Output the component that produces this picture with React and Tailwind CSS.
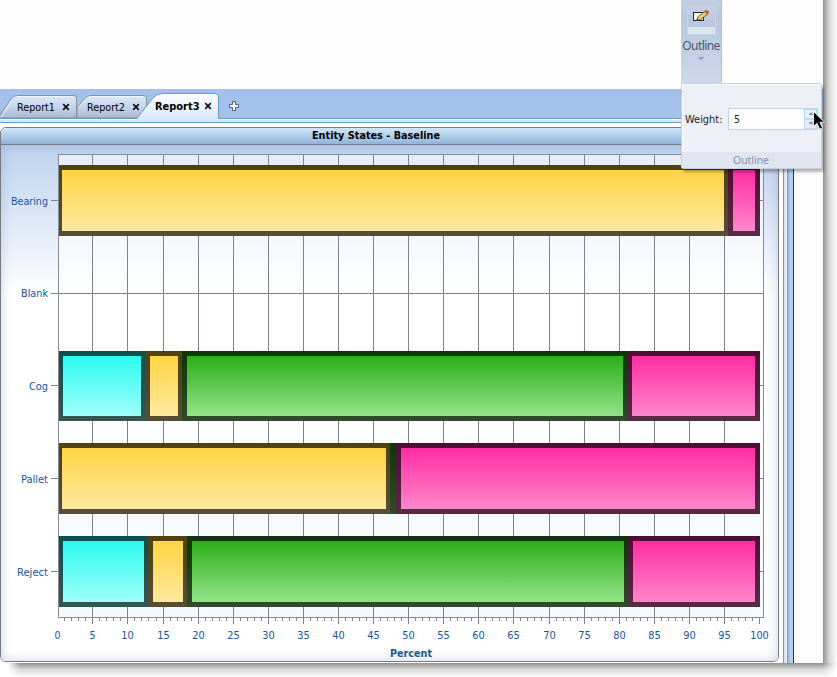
import React from "react";

const X0 = 58;
const FONT = "font-['DejaVu_Sans_Condensed','DejaVu_Sans',sans-serif]";
const UI = "font-['Noto_Sans',sans-serif]";

const palette = {
  cyan: { fill: ["#2bfaf0", "#a0fffb"], edge: ["#0d504d", "#355654"] },
  yellow: { fill: ["#ffd443", "#ffe9a0"], edge: ["#50410f", "#554e36"] },
  green: { fill: ["#2bae18", "#93e389"], edge: ["#0b3606", "#304b2d"] },
  pink: { fill: ["#ff2da3", "#ff87cb"], edge: ["#500d33", "#562c44"] },
};

// Each segment: color, outer left, outer right, inner left, inner right
const rows = [
  { label: "Bearing", line: 200, top: 165, bottom: 236, segs: [["yellow", 59, 728, 62, 724], ["pink", 728, 760, 733, 755]] },
  { label: "Blank", line: 293, segs: [] },
  { label: "Cog", line: 385, top: 351, bottom: 421, segs: [["cyan", 59, 145, 63, 141], ["yellow", 145, 182, 150, 178], ["green", 182, 627, 187, 623], ["pink", 627, 760, 632, 755]] },
  { label: "Pallet", line: 478, top: 443, bottom: 514, segs: [["yellow", 59, 390, 62, 386], ["green", 390, 396, 393, 393], ["pink", 396, 760, 401, 755]] },
  { label: "Reject", line: 571, top: 536, bottom: 607, segs: [["cyan", 59, 148, 63, 144], ["yellow", 148, 187, 153, 183], ["green", 187, 628, 192, 624], ["pink", 628, 760, 633, 755]] },
];
const labelWidths = { Bearing: 37, Blank: 27, Cog: 19, Pallet: 27, Reject: 31 };
const xAt = (v) => Math.floor(57.75 + v * 7.018);

function Chart() {
  const majors = Array.from({ length: 21 }, (_, i) => i * 5);
  const minors = Array.from({ length: 101 }, (_, i) => i).filter((i) => i % 5);
  return (
    <svg width="777" height="516" viewBox="1 145 777 516" shapeRendering="crispEdges" className={`block ${FONT}`}>
      <defs>
        {Object.entries(palette).map(([k, c]) => (
          <React.Fragment key={k}>
            <linearGradient id={`f-${k}`} x2="0" y2="1"><stop stopColor={c.fill[0]} /><stop offset="1" stopColor={c.fill[1]} /></linearGradient>
            <linearGradient id={`e-${k}`} x2="0" y2="1"><stop stopColor={c.edge[0]} /><stop offset="1" stopColor={c.edge[1]} /></linearGradient>
          </React.Fragment>
        ))}
        <linearGradient id="plot" x2="0" y2="1">
          <stop stopColor="#e6edf8" /><stop offset=".08" stopColor="#ebf1fa" /><stop offset=".3" stopColor="#fff" /><stop offset=".45" stopColor="#fff" /><stop offset="1" stopColor="#f4f9fd" />
        </linearGradient>
      </defs>
      <rect x={X0} y="154" width="706" height="464" fill="url(#plot)" />
      {majors.slice(1, 20).map((v) => <rect key={v} x={xAt(v)} y="154" width="1" height="470" fill="#80838c" />)}
      {rows.map((r) => <rect key={r.label} x="51" y={r.line} width="712" height="1" fill="#80838c" />)}
      <rect x="58.5" y="154.5" width="705" height="463" fill="none" stroke="#868b94" />
      {minors.map((v) => <rect key={v} x={xAt(v)} y="618" width="1" height="3" fill="#80838c" />)}
      <rect x="759" y="618" width="1" height="6" fill="#80838c" />
      {rows.map((r) => r.segs.map(([c, x1, x2, a, b]) => (
        <g key={r.label + c}>
          <rect x={x1} y={r.top} width={x2 - x1} height={r.bottom - r.top} fill={`url(#e-${c})`} />
          <rect x={a} y={r.top + 5} width={b - a} height={r.bottom - r.top - 10} fill={`url(#f-${c})`} />
        </g>
      )))}
      <g fill="#15569b" fontSize="11">
        {rows.map((r) => (
          <text key={r.label} x={48 - labelWidths[r.label]} y={r.line + (r.label === "Blank" ? 4 : 5)} textLength={labelWidths[r.label]} lengthAdjust="spacingAndGlyphs">{r.label}</text>
        ))}
        {majors.map((v) => {
          const w = v < 10 ? 6 : v < 100 ? 12.5 : 18.5;
          return <text key={v} x={xAt(v) + 0.5 - w / 2} y="639" textLength={w} lengthAdjust="spacingAndGlyphs">{v}</text>;
        })}
        <text x="390" y="657" fontWeight="bold" textLength="42" lengthAdjust="spacingAndGlyphs">Percent</text>
      </g>
    </svg>
  );
}

function TabLabels() {
  const items = [["Report1", 17, 38, 111, 66], ["Report2", 87, 38, 111, 136], ["Report3", 155, 44.5, 110, 208]];
  return (
    <svg width="823" height="38" viewBox="0 89 823 38" className={`block ${FONT}`}>
      <defs>
        <linearGradient id="tab" x2="0" y2="1"><stop stopColor="#dce9f8" /><stop offset=".5" stopColor="#c5d6eb" /><stop offset="1" stopColor="#a3bad6" /></linearGradient>
        <linearGradient id="active" x2="0" y2="1"><stop stopColor="#fff" /><stop offset="1" stopColor="#d7e8fb" /></linearGradient>
      </defs>
      <rect y="89" width="823" height="29" fill="#a3c1ea" />
      <rect y="118" width="823" height="1" fill="#629fc1" />
      <rect y="119" width="823" height="1" fill="#fff" />
      <rect y="120" width="823" height="2" fill="#d7e8fb" />
      <rect y="122" width="823" height="1" fill="#629fc1" />
      <rect y="123" width="823" height="4" fill="#fff" />
      <path d="M-2 118 L11 99 Q14 95.500 18 95.500 H73 Q76.500 95.500 76.500 98 V118Z" fill="url(#tab)" stroke="#8790a0" />
      <path d="M77 118 V108 L84 99 Q87 95.500 91 95.500 H143 Q146.500 95.500 146.500 98 V118Z" fill="url(#tab)" stroke="#8790a0" />
      <path d="M1 117 L12 100 Q15 96.500 18 96.500 H73 M78 108 L85 100 Q88 96.500 91 96.500 H143" fill="none" stroke="#eef5fc" />
      <rect y="118" width="137" height="1" fill="#629fc1" />
      <path d="M136 120 L153 98 Q157 93.500 162 93.500 H215 Q218.500 93.500 218.500 97 V120Z" fill="url(#active)" />
      <path d="M136.500 118.500 L153 98 Q157 93.500 162 93.500 H215 Q218.500 93.500 218.500 97 V118.500" fill="none" stroke="#629fc1" />
      {items.map(([t, x, w, y, c], i) => (
        <g key={t}>
          <text x={x} y={y} fontSize="11" fontWeight={i === 2 ? "bold" : "normal"} fill="#000" textLength={w} lengthAdjust="spacingAndGlyphs">{t}</text>
          <path d={`M${c - 2.8} ${y - 6.8}l5.600 5.600m0-5.600l-5.600 5.600`} stroke="#111" strokeWidth="1.7" />
        </g>
      ))}
      <path d="M232.500 101.500h3v3h3v3h-3v3h-3v-3h-3v-3h3z" fill="#fff" stroke="#49618d" />
    </svg>
  );
}

function OutlinePopup() {
  return (
    <div className="absolute left-[681px] top-0 w-[141px]">
      <div className="flex h-[83px] w-[41px] flex-col items-center border-r border-[#aebfd9] bg-linear-to-b from-[#c3cfe2] via-[#b8c7de] via-20% to-[#cdd9ea]">
        <div className="mt-[6px] h-[29px] w-[29px] rounded-xs border border-[#c9d5e7] bg-linear-to-b from-[#c3d0e4] to-[#b5c4dc]">
          <svg width="27" height="27" viewBox="0 0 27 27" className="block">
            <rect y="20" width="27" height="7" fill="#dce4ef" />
            <rect x="5.500" y="5.500" width="10" height="8" fill="#fff" stroke="#222" shapeRendering="crispEdges" />
            <path d="M8.800 13.500l1.200-3.800L17 4 20 6.800 12.700 12.500z" fill="#e8d060" stroke="#4a4330" strokeWidth=".8" />
            <path d="M16.200 4.600L18.200 3.200Q20.600 3.400 20.800 5.600L19.200 7.200z" fill="#d9644f" stroke="#8c4a3a" strokeWidth=".5" />
            <path d="M8.500 13.800l.8-2.200 1.500 1.400z" fill="#222" />
          </svg>
        </div>
        <div className={`${UI} mt-[2px] h-[17px] text-[12px] leading-[17px] tracking-[-0.6px] text-[#4c586e]`}>Outline</div>
        <svg width="7" height="4" className="mt-[3px]"><path d="M0 0h6L3 3.500z" fill="#8b9dc3" /></svg>
      </div>
      <div className="flex h-[86px] w-[141px] flex-col rounded-xs border border-[#c2cfe4] bg-linear-to-b from-[#eceff5] to-[#edf1f7] shadow-[2px_3px_3px_rgba(0,0,0,0.3)]">
        <div className="flex h-[68px] items-center border-t border-l border-white pl-0.5">
          <svg width="40" height="18" className={FONT}><text x="0" y="13" fontSize="11" fill="#222" textLength="37.500" lengthAdjust="spacingAndGlyphs">Weight:</text></svg>
          <div className="ml-[3px] flex h-[22px] w-[90px] border border-[#c3d3e8] bg-[#fdfdfd]">
            <svg width="75" height="20" className={FONT}><text x="5" y="14" fontSize="11" fill="#222" textLength="6" lengthAdjust="spacingAndGlyphs">5</text></svg>
            <div className="flex w-[13px] flex-col">
              <div className="flex h-[10px] items-center justify-center border border-[#a6dff5] bg-[#e8f3fb]"><svg width="6" height="3"><path d="M0.500 3L3 0l2.500 3z" fill="#8194c0" /></svg></div>
              <div className="flex h-[10px] items-center justify-center border border-[#cdd8e9] bg-[#e4ebf5]"><svg width="6" height="3"><path d="M0.500 0h5L3 3z" fill="#8194c0" /></svg></div>
            </div>
          </div>
        </div>
        <div className="h-4 bg-[#e0e5ef]">
          <svg width="139" height="16" className={`block ${UI}`}><text x="51" y="12" fontSize="11" fill="#8390ab" textLength="36" lengthAdjust="spacingAndGlyphs">Outline</text></svg>
        </div>
      </div>
      <svg width="14" height="20" viewBox="0 0 14 20" className="absolute left-[132px] top-[111px]">
        <path d="M.5.5V15.500L4 12.200l2.800 6 2.700-1.300-2.700-5.700h4.700z" fill="#000" stroke="#fff" strokeWidth=".8" />
      </svg>
    </div>
  );
}

export default function App() {
  return (
    <div className="relative h-[677px] w-[837px] overflow-hidden bg-white">
      <div className="flex h-[663px]">
        <div className="flex w-[823px] flex-col bg-[#fefefe]">
          <div className="h-[89px]" />
          <TabLabels />
          <div className="flex h-[536px]">
            <div className="h-[535px] w-[779px] overflow-hidden rounded-[6px] border border-[#777b80]">
              <div className="h-[17px] border-b border-[#777b80] bg-linear-to-b from-[#d2e7fb] to-[#92b4da]">
                <svg width="777" height="16" className={`block ${FONT}`}><text x="311" y="11" fontSize="11" fontWeight="bold" textLength="128" lengthAdjust="spacingAndGlyphs">Entity States - Baseline</text></svg>
              </div>
              <div className="h-[516px] bg-linear-to-b from-[#bdd1ee] via-white via-29% to-white shadow-[inset_0_0_12px_rgba(80,100,150,0.28)]">
                <Chart />
              </div>
            </div>
            <div className="ml-1 flex w-[11px]">
              <div className="w-px bg-[#629fc1]" />
              <div className="w-0.5 bg-[#d5e6fa]" />
              <div className="w-px bg-white" />
              <div className="w-px bg-[#629fc1]" />
              <div className="w-[2px] bg-[#a3c1ea]" />
              <div className="w-[3px] bg-[#b7d0ef]" />
              <div className="w-px bg-[#24344c]" />
            </div>
          </div>
        </div>
        <div className="w-[14px] bg-linear-to-r from-[#919191] via-[#d8d8d8] via-45% to-[#fdfdfd]" />
      </div>
      <div className="ml-2 h-[14px] w-[829px] bg-linear-to-b from-[#919191] via-[#d8d8d8] via-45% to-[#fdfdfd] mask-[linear-gradient(to_right,transparent,black_12px,black_815px,transparent)]" />
      <OutlinePopup />
    </div>
  );
}
